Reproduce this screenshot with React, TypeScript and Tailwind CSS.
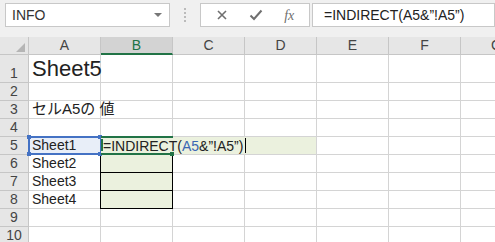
import React from "react"

const cols = ["A", "B", "C", "D", "E", "F", "G"]
const rows = [1, 2, 3, 4, 5, 6, 7, 8, 9, 10]

const cellText: Record<string, string> = {
  A3: "セルA5の 値",
  A5: "Sheet1",
  A6: "Sheet2",
  A7: "Sheet3",
  A8: "Sheet4",
}

function Formula({ blue }: { blue?: boolean }) {
  return (
    <>
      =INDIRECT(<span className={blue ? "text-[#3a66b3]" : ""}>A5</span>&amp;”!A5”)
    </>
  )
}

export default function App() {
  return (
    <div
      className="w-[495px] h-[242px] overflow-hidden bg-white text-[#222] relative"
      style={{ fontFamily: '"Liberation Sans", "Noto Sans CJK JP", sans-serif' }}
    >
      {/* ── Formula bar ── */}
      <div className="h-[37px] bg-[#f0f0f0] flex items-start pt-[3px] pl-[5px]">
        <div className="w-[165px] h-[24px] bg-white border border-[#c8c8c8] flex items-center pl-[6px] pr-[7px] text-[14px] text-[#333]">
          <span className="flex-1">INFO</span>
          <span className="w-0 h-0 border-l-[4px] border-r-[4px] border-t-[4px] border-l-transparent border-r-transparent border-t-[#777]" />
        </div>
        <div className="w-[30px] h-[24px] flex flex-col items-center justify-center gap-[2px]">
          <span className="size-[2px] bg-[#bbb]" />
          <span className="size-[2px] bg-[#bbb]" />
          <span className="size-[2px] bg-[#bbb]" />
          <span className="size-[2px] bg-[#bbb]" />
        </div>
        <div className="w-[110px] h-[24px] bg-white border border-[#c8c8c8] flex items-center justify-around px-[4px] text-[#6f6f6f]">
          <svg width="12" height="12" viewBox="0 0 12 12">
            <path d="M2 2 L10 10 M10 2 L2 10" stroke="#6f6f6f" strokeWidth="1.6" />
          </svg>
          <svg width="14" height="12" viewBox="0 0 14 12">
            <path d="M1.5 6.5 L5 10 L12.5 1.5" stroke="#6f6f6f" strokeWidth="2" fill="none" />
          </svg>
          <span className="italic text-[14px]" style={{ fontFamily: '"Liberation Serif", serif' }}>
            fx
          </span>
        </div>
        <div className="ml-[2px] flex-1 h-[24px] bg-white border border-[#c8c8c8] flex items-center pl-[11px] text-[14px] text-[#222] whitespace-nowrap">
          <Formula />
        </div>
      </div>

      {/* ── Column headers ── */}
      <div className="flex h-[18px] bg-[#e6e6e6]">
        <div className="w-[29px] shrink-0 border-r border-b border-[#c6c6c6] relative">
          <span className="absolute right-[3px] bottom-[3px] w-0 h-0 border-l-[9px] border-t-[9px] border-l-transparent border-t-transparent border-r-0 border-b-0 border-[#b8b8b8]" style={{ borderBottomWidth: 0 }} />
          <svg className="absolute right-[3px] bottom-[2px]" width="9" height="9" viewBox="0 0 9 9">
            <path d="M9 0 L9 9 L0 9 Z" fill="#b5b5b5" />
          </svg>
        </div>
        {cols.map(c => (
          <div
            key={c}
            className={
              c === "B"
                ? "w-[72px] shrink-0 border-r border-[#c6c6c6] border-b-2 border-b-[#217346] bg-[#d3d3d3] text-[#217346] flex items-center justify-center text-[14px]"
                : "w-[72px] shrink-0 border-r border-b border-[#c6c6c6] text-[#444] flex items-center justify-center text-[14px]"
            }
          >
            {c}
          </div>
        ))}
      </div>

      {/* ── Grid ── */}
      <div className="relative">
        {rows.map(r => (
          <div key={r} className={r === 1 ? "flex h-[28px]" : "flex h-[18px]"}>
            <div className="w-[29px] shrink-0 bg-[#e6e6e6] border-r border-b border-[#c6c6c6] flex items-end justify-center pb-[1px] text-[14px] text-[#444] leading-none">
              <span className="mb-[1px]">{r}</span>
            </div>
            {cols.map(c => {
              const id = `${c}${r}`
              const inB = c === "B" && r >= 6 && r <= 8
              return (
                <div
                  key={id}
                  className={
                    (inB
                      ? "bg-[#ebf1de] border-[#000] "
                      : r === 5 && c === "A"
                      ? "bg-[#e8eef8] border-[#d4d4d4] "
                      : "border-[#d4d4d4] ") +
                    "w-[72px] shrink-0 border-r border-b flex items-end pl-[3px] pb-[1px] text-[14px] whitespace-nowrap leading-none overflow-visible"
                  }
                >
                  {id === "A1" ? (
                    <span className="text-[22px] mb-[1px]">Sheet5</span>
                  ) : id === "A3" ? (
                    <span className="text-[15px] mb-[1px]">{cellText[id]}</span>
                  ) : (
                    <span className="mb-[1px]">{cellText[id]}</span>
                  )}
                </div>
              )
            })}
          </div>
        ))}

        {/* B6:B8 left border */}
        <div className="absolute left-[100px] top-[100px] w-px h-[54px] bg-black" />

        {/* A5 reference highlight */}
        <div className="absolute left-[28px] top-[81px] w-[74px] h-[19px] border-2 border-[#4472c4]" />
        <span className="absolute left-[27px] top-[80px] size-[4px] bg-[#4472c4]" />
        <span className="absolute left-[98px] top-[80px] size-[4px] bg-[#4472c4]" />
        <span className="absolute left-[27px] top-[97px] size-[4px] bg-[#4472c4]" />
        <span className="absolute left-[98px] top-[97px] size-[4px] bg-[#4472c4]" />

        {/* In-cell editor on B5 */}
        <div className="absolute left-[101px] top-[82px] w-[215px] h-[17px] bg-[#ebf1de] flex items-end text-[14px] leading-none whitespace-nowrap pl-[2px] pb-[1px]">
          <Formula blue />
          <span className="ml-[2px] w-px h-[15px] bg-black self-center" />
        </div>
        <div className="absolute left-[101px] top-[81px] w-[72px] h-[2px] bg-[#217346]" />
        <div className="absolute left-[101px] top-[98px] w-[72px] h-[2px] bg-[#217346]" />
        <div className="absolute left-[101px] top-[84px] w-[2px] h-[12px] bg-[#217346]" />
        <span className="absolute left-[170px] top-[97px] size-[4px] bg-[#217346]" />
      </div>
    </div>
  )
}
